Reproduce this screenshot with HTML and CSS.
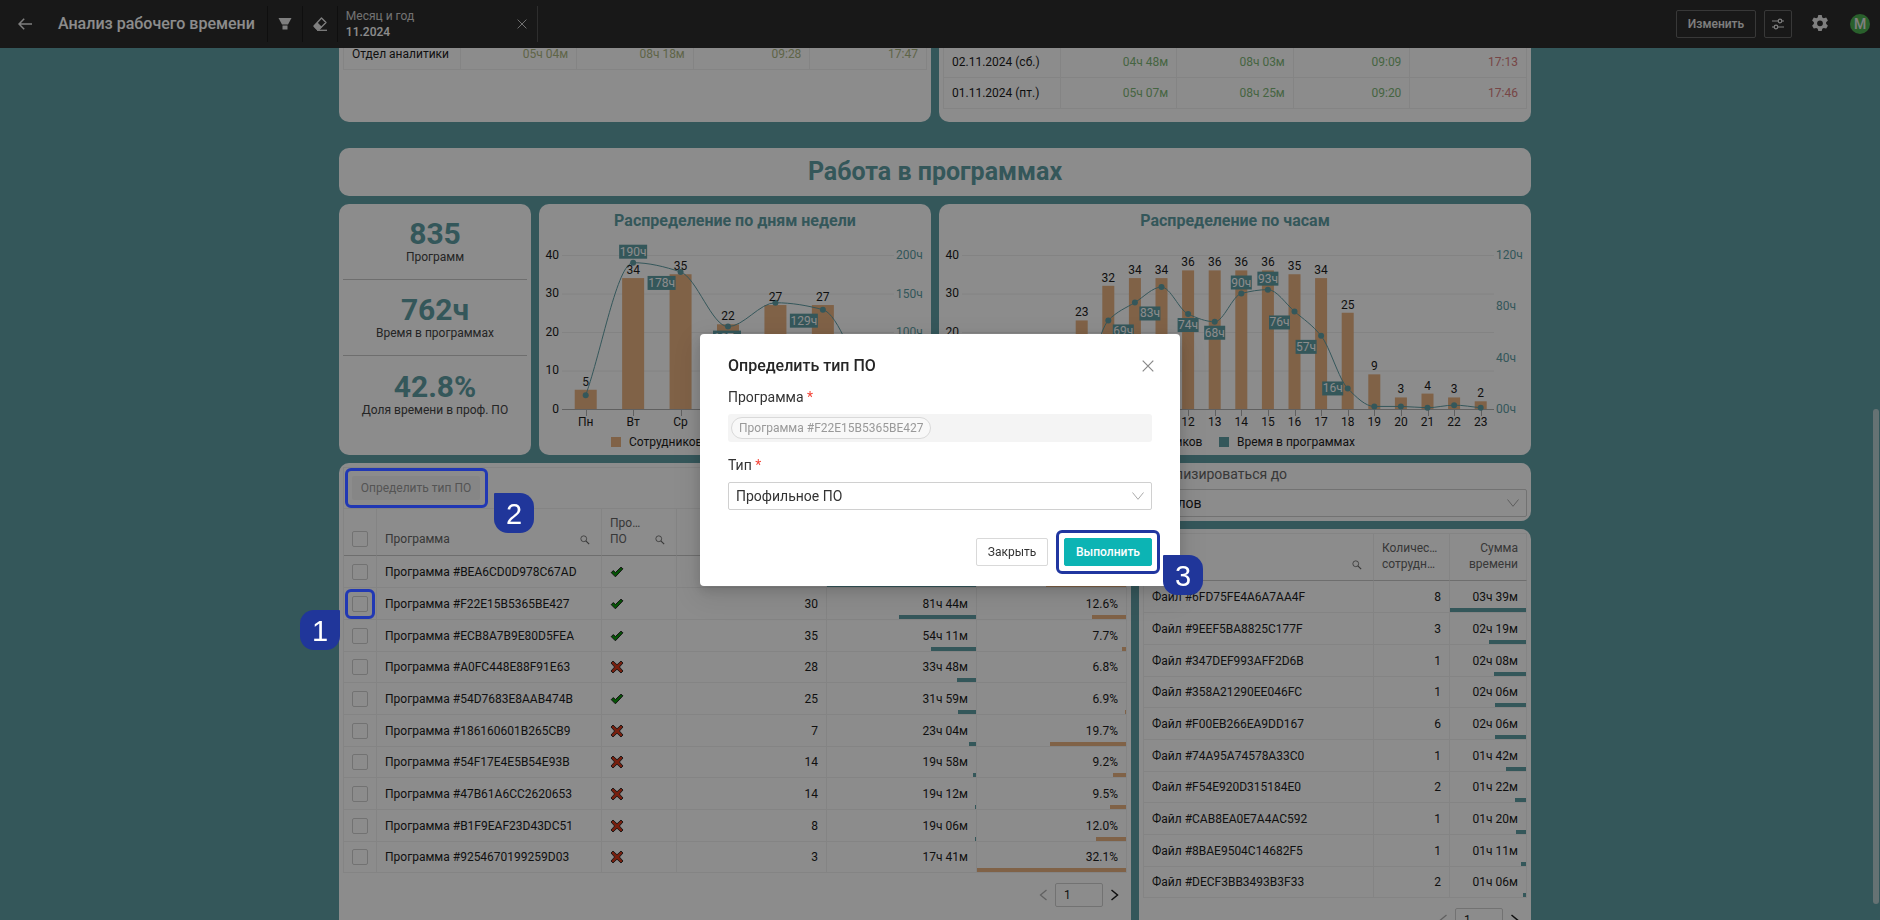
FILE: index.html
```html
<!DOCTYPE html>
<html lang="ru">
<head>
<meta charset="utf-8">
<meta name="viewport" content="width=device-width, initial-scale=1">
<title>Анализ рабочего времени</title>
<link rel="stylesheet" href="styles.css">
</head>
<body>
<svg class="sprite" aria-hidden="true">
  <symbol id="i-search" viewBox="0 0 12 12"><circle cx="4.5" cy="4.5" r="3.5" fill="none" stroke="currentColor"/><path d="M7 7l4 4" stroke="currentColor" stroke-width="1.4"/></symbol>
  <symbol id="i-yes" viewBox="0 0 14 12"><path d="M1.2 6.6L3.4 4.6 5.4 6.6 11 1.2 12.9 2.8 5.4 10.8z" fill="#0a9a0a" stroke="#222" stroke-linejoin="round"/></symbol>
  <symbol id="i-no" viewBox="0 0 14 14"><path d="M3 1L7 4.8 11 1 13 3 9.400 7 13 11 11 13 7 9.200 3 13 1 11 4.600 7 1 3z" fill="#d8391b" stroke="#222" stroke-width=".9" stroke-linejoin="round"/></symbol>
  <symbol id="i-down" viewBox="0 0 12 8"><path d="M.5 .5L6 7.300 11.500 .5" fill="none" stroke="currentColor"/></symbol>
  <symbol id="i-prev" viewBox="0 0 8 12"><path d="M7.500 1L1.500 6l6 5" fill="none" stroke="currentColor" stroke-width="1.300"/></symbol>
  <symbol id="i-next" viewBox="0 0 8 12"><path d="M.5 1l6 5-6 5" fill="none" stroke="currentColor" stroke-width="1.500"/></symbol>
  <symbol id="i-close" viewBox="0 0 12 12"><path d="M.7 .7l10.600 10.600M11.300 .7L.7 11.300" stroke="currentColor" stroke-width="1.200"/></symbol>
</svg>

<header class="topbar">
  <button class="icon-btn back" aria-label="Назад"><svg width="14" height="12" viewBox="0 0 14 12"><path d="M14 6H1M6.200 .8L1 6l5.200 5.200" fill="none" stroke="currentColor" stroke-width="1.500"/></svg></button>
  <h1>Анализ рабочего времени</h1>
  <button class="icon-btn tool" aria-label="Фильтр"><svg width="14" height="12" viewBox="0 0 14 12"><path d="M.5 0h13L10 6.500H4z M4.500 7.500h5V11.500h-5z" fill="currentColor"/></svg></button>
  <button class="icon-btn tool" aria-label="Сбросить"><svg width="16" height="16" viewBox="0 0 16 16"><path d="M9.500 2L14 6.500 7.500 13H5L2 10z" fill="none" stroke="currentColor" stroke-width="1.300" stroke-linejoin="round"/><path d="M5.500 6.500L10 11l-2.500 2.800H4.500L1.500 10.500z" fill="currentColor"/><path d="M5 14.300h10" stroke="currentColor" stroke-width="1.300"/></svg></button>
  <div class="filter">
    <div><span>Месяц и год</span><b>11.2024</b></div>
    <button class="icon-btn" aria-label="Убрать фильтр"><svg width="10" height="10"><use href="#i-close"/></svg></button>
  </div>
  <div class="actions">
    <button class="outline">Изменить</button>
    <button class="outline square" aria-label="Параметры"><svg width="12" height="12" viewBox="0 0 12 12" fill="none" stroke="currentColor" stroke-width="1.200"><path d="M0 3h6M10 3h2M0 9h2M6 9h6"/><circle cx="8" cy="3" r="1.800"/><circle cx="4" cy="9" r="1.800"/></svg></button>
    <button class="icon-btn gear" aria-label="Настройки"><svg width="18" height="18" viewBox="0 0 18 18"><path fill="currentColor" fill-rule="evenodd" d="M7.300 0h3.400l.6 2.500 1.400.8 2.500-.7 1.700 2.900-1.800 1.800v1.500l1.800 1.900-1.700 2.900-2.500-.7-1.400.8-.6 2.400H7.300l-.6-2.400-1.400-.8-2.500.7-1.700-2.900 1.800-1.900V7.300L1.100 5.500l1.700-2.900 2.500.7 1.400-.8zM9 5.400a2.900 2.900 0 100 5.800 2.900 2.900 0 000-5.800z"/></svg></button>
    <button class="avatar">М</button>
  </div>
</header>

<main class="viewport">
  <div class="board">
    <section class="row halves">
      <div class="card">
        <table class="grid plain">
          <tbody><tr><td>Отдел аналитики</td><td class="mid">05ч 04м</td><td class="mid">08ч 18м</td><td class="mid">09:28</td><td class="mid">17:47</td></tr></tbody>
        </table>
      </div>
      <div class="card lowered">
        <table class="grid plain">
          <tbody>
            <tr><td>02.11.2024 (сб.)</td><td class="good">04ч 48м</td><td class="good">08ч 03м</td><td class="good">09:09</td><td class="bad">17:13</td></tr>
            <tr><td>01.11.2024 (пт.)</td><td class="good">05ч 07м</td><td class="good">08ч 25м</td><td class="good">09:20</td><td class="bad">17:46</td></tr>
          </tbody>
        </table>
      </div>
    </section>

    <h2 class="card banner">Работа в программах</h2>

    <section class="row charts">
      <div class="card kpis">
        <div class="kpi"><strong>835</strong><span>Программ</span></div>
        <div class="kpi"><strong>762ч</strong><span>Время в программах</span></div>
        <div class="kpi"><strong>42.8%</strong><span>Доля времени в проф. ПО</span></div>
      </div>
      <div class="card chart"><h3>Распределение по дням недели</h3><svg id="by-day"></svg></div>
      <div class="card chart"><h3>Распределение по часам</h3><svg id="by-hour"></svg></div>
    </section>

    <section class="row tables">
      <div class="card">
        <div class="panel">
          <div class="toolbar">
            <div class="anchor"><button class="define" disabled>Определить тип ПО</button><span class="frame"></span><span class="step after">2</span></div>
          </div>
          <table class="grid data programs">
            <colgroup><col class="c-check"><col class="c-name"><col class="c-flag"><col><col><col></colgroup>
            <thead><tr>
              <th><input type="checkbox" aria-label="Выбрать все"></th>
              <th><div class="head"><span>Программа</span><svg width="10" height="10"><use href="#i-search"/></svg></div></th>
              <th><div class="head"><span>Про…<br>ПО</span><svg width="10" height="10"><use href="#i-search"/></svg></div></th>
              <th class="num">Количество<br>сотрудников</th><th class="num">Сумма<br>времени</th><th class="num">Доля</th>
            </tr></thead>
            <tbody>
              <tr><td><input type="checkbox" aria-label="Выбрать"></td><td>Программа #BEA6CD0D978C67AD</td><td><svg width="14" height="12"><use href="#i-yes"/></svg></td><td class="num">36</td><td class="num">137ч 52м<i class="bar" style="width:100%"></i></td><td class="num">20.4%<i class="bar warm" style="width:54%"></i></td></tr>
              <tr><td><div class="anchor"><input type="checkbox" aria-label="Выбрать"><span class="frame"></span><span class="step before">1</span></div></td><td>Программа #F22E15B5365BE427</td><td><svg width="14" height="12"><use href="#i-yes"/></svg></td><td class="num">30</td><td class="num">81ч 44м<i class="bar" style="width:52%"></i></td><td class="num">12.6%<i class="bar warm" style="width:23%"></i></td></tr>
              <tr><td><input type="checkbox" aria-label="Выбрать"></td><td>Программа #ECB8A7B9E80D5FEA</td><td><svg width="14" height="12"><use href="#i-yes"/></svg></td><td class="num">35</td><td class="num">54ч 11м<i class="bar" style="width:30%"></i></td><td class="num">7.7%<i class="bar warm" style="width:3%"></i></td></tr>
              <tr><td><input type="checkbox" aria-label="Выбрать"></td><td>Программа #A0FC448E88F91E63</td><td><svg width="14" height="14"><use href="#i-no"/></svg></td><td class="num">28</td><td class="num">33ч 48м<i class="bar" style="width:13%"></i></td><td class="num">6.8%</td></tr>
              <tr><td><input type="checkbox" aria-label="Выбрать"></td><td>Программа #54D7683E8AAB474B</td><td><svg width="14" height="12"><use href="#i-yes"/></svg></td><td class="num">25</td><td class="num">31ч 59м<i class="bar" style="width:12%"></i></td><td class="num">6.9%<i class="bar warm" style="width:1%"></i></td></tr>
              <tr><td><input type="checkbox" aria-label="Выбрать"></td><td>Программа #186160601B265CB9</td><td><svg width="14" height="14"><use href="#i-no"/></svg></td><td class="num">7</td><td class="num">23ч 04м<i class="bar" style="width:5%"></i></td><td class="num">19.7%<i class="bar warm" style="width:51%"></i></td></tr>
              <tr><td><input type="checkbox" aria-label="Выбрать"></td><td>Программа #54F17E4E5B54E93B</td><td><svg width="14" height="14"><use href="#i-no"/></svg></td><td class="num">14</td><td class="num">19ч 58м<i class="bar" style="width:2%"></i></td><td class="num">9.2%<i class="bar warm" style="width:9%"></i></td></tr>
              <tr><td><input type="checkbox" aria-label="Выбрать"></td><td>Программа #47B61A6CC2620653</td><td><svg width="14" height="14"><use href="#i-no"/></svg></td><td class="num">14</td><td class="num">19ч 12м<i class="bar" style="width:1%"></i></td><td class="num">9.5%<i class="bar warm" style="width:11%"></i></td></tr>
              <tr><td><input type="checkbox" aria-label="Выбрать"></td><td>Программа #B1F9EAF23D43DC51</td><td><svg width="14" height="14"><use href="#i-no"/></svg></td><td class="num">8</td><td class="num">19ч 06м<i class="bar" style="width:1%"></i></td><td class="num">12.0%<i class="bar warm" style="width:20%"></i></td></tr>
              <tr><td><input type="checkbox" aria-label="Выбрать"></td><td>Программа #9254670199259D03</td><td><svg width="14" height="14"><use href="#i-no"/></svg></td><td class="num">3</td><td class="num">17ч 41м</td><td class="num">32.1%<i class="bar warm" style="width:100%"></i></td></tr>
            </tbody>
          </table>
        </div>
        <nav class="pager"><button disabled aria-label="Назад"><svg width="8" height="12"><use href="#i-prev"/></svg></button><input type="text" value="1" aria-label="Страница"><button aria-label="Вперёд"><svg width="8" height="12"><use href="#i-next"/></svg></button></nav>
      </div>

      <div class="stack">
        <div class="card detail">
          <label for="detail">Детализироваться до</label>
          <div class="select"><select id="detail"><option>Файлов</option></select><svg width="12" height="8"><use href="#i-down"/></svg></div>
        </div>
        <div class="card grow">
          <table class="grid data files">
            <colgroup><col><col class="c-count"><col class="c-sum"></colgroup>
            <thead><tr>
              <th><div class="head"><span>Файл</span><svg width="10" height="10"><use href="#i-search"/></svg></div></th>
              <th>Количес…<br>сотрудн…</th><th class="num">Сумма<br>времени</th>
            </tr></thead>
            <tbody>
              <tr><td>Файл #6FD75FE4A6A7AA4F</td><td class="num">8</td><td class="num">03ч 39м<i class="bar" style="width:100%"></i></td></tr>
              <tr><td>Файл #9EEF5BA8825C177F</td><td class="num">3</td><td class="num">02ч 19м<i class="bar" style="width:49%"></i></td></tr>
              <tr><td>Файл #347DEF993AFF2D6B</td><td class="num">1</td><td class="num">02ч 08м<i class="bar" style="width:42%"></i></td></tr>
              <tr><td>Файл #358A21290EE046FC</td><td class="num">1</td><td class="num">02ч 06м<i class="bar" style="width:41%"></i></td></tr>
              <tr><td>Файл #F00EB266EA9DD167</td><td class="num">6</td><td class="num">02ч 06м<i class="bar" style="width:41%"></i></td></tr>
              <tr><td>Файл #74A95A74578A33C0</td><td class="num">1</td><td class="num">01ч 42м<i class="bar" style="width:26%"></i></td></tr>
              <tr><td>Файл #F54E920D315184E0</td><td class="num">2</td><td class="num">01ч 22м<i class="bar" style="width:14%"></i></td></tr>
              <tr><td>Файл #CAB8EA0E7A4AC592</td><td class="num">1</td><td class="num">01ч 20м<i class="bar" style="width:13%"></i></td></tr>
              <tr><td>Файл #8BAE9504C14682F5</td><td class="num">1</td><td class="num">01ч 11м<i class="bar" style="width:7%"></i></td></tr>
              <tr><td>Файл #DECF3BB3493B3F33</td><td class="num">2</td><td class="num">01ч 06м<i class="bar" style="width:4%"></i></td></tr>
            </tbody>
          </table>
          <nav class="pager"><button disabled aria-label="Назад"><svg width="8" height="12"><use href="#i-prev"/></svg></button><input type="text" value="1" aria-label="Страница"><button aria-label="Вперёд"><svg width="8" height="12"><use href="#i-next"/></svg></button></nav>
        </div>
      </div>
    </section>
  </div>
  <div class="scrollbar"></div>
</main>

<div class="mask">
  <form class="modal" role="dialog" aria-labelledby="modal-title">
    <div class="modal-head"><h2 id="modal-title">Определить тип ПО</h2><button type="button" class="icon-btn" aria-label="Закрыть окно"><svg width="12" height="12"><use href="#i-close"/></svg></button></div>
    <span class="caption">Программа <em>*</em></span>
    <div class="tags"><span>Программа #F22E15B5365BE427</span></div>
    <label class="caption" for="kind">Тип <em>*</em></label>
    <div class="select"><select id="kind"><option>Профильное ПО</option></select><svg width="12" height="8"><use href="#i-down"/></svg></div>
    <div class="modal-foot">
      <button type="button" class="btn">Закрыть</button>
      <div class="anchor"><button type="button" class="btn primary">Выполнить</button><span class="frame"></span><span class="step after">3</span></div>
    </div>
  </form>
</div>
<script src="charts.js"></script>
</body>
</html>
```

FILE: styles.css
```css
* { box-sizing: border-box; }
body {
  margin: 0;
  height: 100vh;
  display: flex;
  flex-direction: column;
  overflow: hidden;
  background: #609ea5;
  color: #1c1c1c;
  font: 12px/16px Roboto, "Noto Sans", sans-serif;
}
button, input, select { font: inherit; color: inherit; }
button { padding: 0; border: 0; background: none; }
svg { display: block; }
h1, h2, h3 { margin: 0; }
.sprite { position: absolute; width: 0; height: 0; }

/* Top bar */
.topbar {
  flex: none;
  display: flex;
  align-items: center;
  height: 48px;
  padding-right: 10px;
  background: #2d2d2d;
  color: #e8e8e8;
}
.topbar h1 { padding-right: 12px; font-size: 16px; line-height: 24px; font-weight: 500; color: #fff; }
.icon-btn { display: grid; place-items: center; }
.back { width: 50px; margin-right: 8px; height: 36px; }
.tool { width: 35px; height: 36px; border-left: 1px solid #1c1c1c; }
.filter {
  display: flex;
  align-items: center;
  justify-content: space-between;
  width: 201px;
  height: 36px;
  padding: 0 10px 0 8px;
  border-left: 1px solid #1c1c1c;
  border-right: 1px solid #555;
}
.filter span, .filter b { display: block; }
.filter span { color: #d0d0d0; }
.filter b { font-weight: 500; color: #fff; }
.filter .icon-btn { color: #ccc; }
.actions { display: flex; align-items: center; gap: 8px; margin-left: auto; }
.outline {
  display: grid;
  place-items: center;
  width: 80px;
  height: 28px;
  border: 1px solid #666;
  border-radius: 2px;
  font-weight: 500;
}
.outline.square { width: 28px; }
.gear { width: 40px; height: 28px; }
.avatar { width: 20px; height: 20px; margin-left: 2px; border-radius: 50%; background: #4caf50; font-size: 14px; font-weight: 500; }

/* Board */
.viewport { position: relative; flex: 1; min-height: 0; overflow: hidden; padding-right: 10px; }
.scrollbar { position: absolute; right: 1px; top: 361px; bottom: 16px; width: 6px; border-radius: 3px; background: #b9cfd2; }
.board { max-width: 1192px; margin: -10px auto 0; }
.card { border-radius: 10px; background: #fff; padding: 4px; }
.row { display: grid; gap: 8px; }
.halves { grid-template-columns: 1fr 1fr; height: 84px; }
.halves .card { padding-top: 0; }
.halves .lowered { padding-top: 8px; }
.banner {
  margin: 26px 0 8px;
  padding: 8px;
  text-align: center;
  font-size: 25px;
  line-height: 32px;
  font-weight: 700;
  color: #609ea5;
}
.charts { grid-template-columns: 192fr 392fr 592fr; margin-bottom: 8px; }
.kpis { padding: 0 4px; }
.kpi { height: 76px; padding-top: 15px; text-align: center; border-bottom: 1px solid #c8c8c8; }
.kpi:last-child { padding-top: 16px; border: 0; }
.kpi strong { display: block; font-size: 30px; line-height: 30px; color: #609ea5; }
.kpi span { display: block; line-height: 16px; color: #444; }
.chart { padding: 4px 0 0; }
.chart h3 { text-align: center; font-size: 16px; line-height: 26px; font-weight: 700; color: #609ea5; }
.chart svg { width: 100%; height: 221px; }
.chart text { font-size: 12px; fill: #1c1c1c; }
.chart .grid-line { stroke: #eee; }
.chart .axis { stroke: #b0b0b0; }
.chart .col { fill: #e9b281; }
.chart .curve { fill: none; stroke: #609ea5; stroke-width: 1; }
.chart .dot, .chart .chip { fill: #609ea5; }
.chart .scale { fill: #609ea5; }
.chart .chip-text { fill: #fff; }

/* Tables */
.tables { grid-template-columns: 792fr 392fr; }
.stack { display: flex; flex-direction: column; gap: 8px; }
.grow { flex: 1; }
.grid { width: 100%; table-layout: fixed; border-collapse: separate; border-spacing: 0; border-left: 1px solid #f0f0f0; }
.grid td, .grid th {
  position: relative;
  height: 32px;
  padding: 0 8px;
  border-right: 1px solid #f0f0f0;
  border-bottom: 1px solid #f0f0f0;
  text-align: left;
  white-space: nowrap;
}
.plain td + td { text-align: right; }
.plain tr + tr td { height: 31px; }
.mid { color: #aeb884; }
.good { color: #7fb878; }
.bad { color: #d98080; }
.panel { border-top: 1px solid #f0f0f0; }
.files { border-top: 1px solid #f0f0f0; }
.toolbar { height: 41px; padding: 8px; border: 1px solid #f0f0f0; border-top: 0; }
.define { width: 128px; height: 24px; background: #f5f5f5; color: #999; border-radius: 2px; }
.data th { height: 47px; padding-bottom: 8px; vertical-align: bottom; font-weight: 400; color: #666; border-bottom-color: #c8c8c8; }
.data .num { text-align: right; }
.data tbody tr:nth-child(3n+4) td { height: 31px; }
.head { display: flex; align-items: flex-end; justify-content: space-between; padding-right: 3px; }
.head svg { margin-bottom: 2px; }
.c-check { width: 33px; }
.c-name { width: 225px; }
.c-flag { width: 75px; }
.c-count { width: 76px; }
.c-sum { width: 77px; }
.grid input {
  display: block;
  appearance: none;
  width: 16px;
  height: 16px;
  margin: 0;
  border: 1px solid #d0d0d0;
  border-radius: 2px;
}
.bar { position: absolute; right: 0; bottom: 0; height: 4px; background: #609ea5; }
.warm { background: #e9b281; }
.pager { display: flex; justify-content: flex-end; align-items: center; gap: 8px; padding: 10px 8px 10px 0; }
.pager input { width: 48px; height: 24px; padding: 0 8px; border: 1px solid #d0d0d0; border-radius: 2px; background: #fff; }
.pager button:disabled { color: #b0b0b0; }
.detail { padding-top: 1px; }
.detail label { display: block; padding-bottom: 5px; font-size: 14px; line-height: 20px; color: #666; }
.select { position: relative; font-size: 14px; }
.select select { display: block; width: 100%; height: 28px; padding: 0 7px; appearance: none; background: #fff; border: 1px solid #d0d0d0; border-radius: 2px; }
.select svg { position: absolute; right: 8px; top: 10px; color: #aaa; }

/* Numbered steps */
.anchor { position: relative; width: max-content; }
.frame { position: absolute; z-index: 30; inset: -8px; border: 3px solid #2036a0; border-radius: 6px; }
.define + .frame { left: -7px; border-color: #2138b4; }
.grid .anchor .frame { inset: -7px; border-color: #2138b4; }
.step {
  position: absolute;
  z-index: 31;
  width: 40px;
  height: 40px;
  background: #20369a;
  color: #fff;
  text-align: center;
  font: 29px/42px "Liberation Sans", Arial, sans-serif;
}
.after { left: 100%; top: 100%; margin: -11px 0 0 11px; border-radius: 1px 14px 14px 14px; }
.before { right: 100%; top: 100%; margin: -2px 12px 0 0; border-radius: 14px 1px 14px 14px; }
.toolbar .after { margin: -7px 0 0 14px; }

/* Dialog */
.mask { position: fixed; z-index: 20; inset: 0; display: flex; justify-content: center; align-items: center; background: rgba(0, 0, 0, .45); }
.modal {
  width: 480px;
  padding: 20px 28px;
  border-radius: 4px;
  background: #fff;
  color: #333;
  font-size: 14px;
  box-shadow: 0 4px 12px rgba(0, 0, 0, .15), 0 9px 28px 8px rgba(0, 0, 0, .08);
}
.modal-head { display: flex; align-items: center; justify-content: space-between; height: 24px; }
.modal-head h2 { font-size: 16px; font-weight: 500; color: #262626; }
.modal-head .icon-btn { color: #888; margin-right: -2px; }
.caption { display: block; padding: 8px 0 6px; line-height: 22px; }
.caption em { color: #f44336; font-style: normal; }
.tags { height: 28px; padding: 3px; border-radius: 3px; background: #f4f4f4; }
.tags span { display: inline-block; height: 22px; padding: 0 6px 0 7px; border: 1px solid #d9d9d9; border-radius: 11px; background: #f8f8f8; color: #999; font-size: 12px; line-height: 20px; }
.tags + .caption { padding: 12px 0 6px; }
.modal-foot { display: flex; justify-content: flex-end; gap: 16px; padding-top: 28px; }
.btn { display: block; width: 72px; height: 28px; border: 1px solid #d9d9d9; border-radius: 2px; font-size: 12px; }
.btn.primary { width: 88px; border-color: #0cb4b4; background: #0cb4b4; color: #fff; font-weight: 500; }
```

FILE: charts.js
```js
const NS = 'http://www.w3.org/2000/svg';
const BASE = 175;
const HEIGHT = 154;

function add(svg, tag, attrs, text) {
  const node = document.createElementNS(NS, tag);
  for (const key in attrs) node.setAttribute(key, attrs[key]);
  if (text !== undefined) node.textContent = text;
  svg.appendChild(node);
}

// Cubic curve that never overshoots its points.
function monotone(points) {
  const slope = (a, b) => (b[1] - a[1]) / (b[0] - a[0]);
  const last = points.length - 1;
  const m = points.map((p, i) => {
    if (i === 0) return slope(points[0], points[1]);
    if (i === last) return slope(points[i - 1], p);
    const s0 = slope(points[i - 1], p), s1 = slope(p, points[i + 1]);
    return s0 * s1 <= 0 ? 0 : (2 * s0 * s1) / (s0 + s1);
  });
  let d = `M${points[0]}`;
  for (let i = 0; i < last; i++) {
    const [a, b] = [points[i], points[i + 1]], h = (b[0] - a[0]) / 3;
    d += `C${a[0] + h} ${a[1] + m[i] * h} ${b[0] - h} ${b[1] - m[i + 1] * h} ${b[0]} ${b[1]}`;
  }
  return d;
}

function draw(id, o) {
  const svg = document.getElementById(id);
  svg.setAttribute('viewBox', `0 0 ${o.width} 221`);
  const right = o.width - 37, left = o.left, step = (right - left) / o.names.length;
  for (let v = 0; v <= 40; v += 10) {
    const y = BASE - v / 40 * HEIGHT + .5;
    add(svg, 'path', { d: `M${left} ${y}H${right}`, class: v ? 'grid-line' : 'axis' });
    add(svg, 'text', { x: left - 3, y: y + 3, 'text-anchor': 'end' }, v);
  }
  o.scale.forEach((t, i) => add(svg, 'text', { x: right + 2, y: BASE + 4 - i * HEIGHT / (o.scale.length - 1), class: 'scale' }, t));
  const x = i => left + step * (i + .5);
  o.names.forEach((t, i) => {
    add(svg, 'path', { d: `M${Math.round(x(i)) + .5} ${BASE}v7`, class: 'axis' });
    add(svg, 'text', { x: x(i), y: 192, 'text-anchor': 'middle' }, t);
    const h = o.bars[i] / 40 * HEIGHT;
    if (h) add(svg, 'rect', { x: x(i) - o.bar / 2, y: BASE - h, width: o.bar, height: h, class: 'col' });
  });
  const points = o.hours.map((v, i) => [x(i), BASE - v / o.max * HEIGHT]);
  add(svg, 'path', { d: monotone(points), class: 'curve' });
  points.forEach(p => add(svg, 'circle', { cx: p[0], cy: p[1], r: 3, class: 'dot' }));
  o.bars.forEach((v, i) => v && add(svg, 'text', { x: x(i), y: BASE - v / 40 * HEIGHT - 4, 'text-anchor': 'middle' }, v));
  o.chips.forEach(([i, dx, dy, text]) => {
    const w = text.length * 7, cx = points[i][0] + dx, cy = points[i][1] + dy;
    add(svg, 'rect', { x: cx - w / 2, y: cy - 7, width: w, height: 14, class: 'chip' });
    add(svg, 'text', { x: cx, y: cy + 4, 'text-anchor': 'middle', class: 'chip-text' }, text);
  });
  const start = o.width / 2 - 124;
  add(svg, 'rect', { x: start, y: 203, width: 10, height: 10, class: 'col' });
  add(svg, 'text', { x: start + 18, y: 212 }, 'Сотрудников');
  add(svg, 'rect', { x: start + 108, y: 203, width: 10, height: 10, class: 'chip' });
  add(svg, 'text', { x: start + 126, y: 212 }, 'Время в программах');
}

draw('by-day', {
  width: 392, left: 23, bar: 22, max: 200,
  names: ['Пн', 'Вт', 'Ср', 'Чт', 'Пт', 'Сб', 'Вс'],
  bars: [5, 34, 35, 22, 27, 27, 6],
  hours: [18, 190, 178, 107, 138, 129, 20],
  scale: ['00ч', '50ч', '100ч', '150ч', '200ч'],
  chips: [[1, 0, -11, '190ч'], [2, -19, 11, '178ч'], [3, -1, 11, '107ч'], [5, -19, 11, '129ч']]
});

draw('by-hour', {
  width: 592, left: 23, bar: 12, max: 120,
  names: [4, 5, 6, 7, 8, 9, 10, 11, 12, 13, 14, 15, 16, 17, 18, 19, 20, 21, 22, 23],
  bars: [0, 0, 0, 1, 23, 32, 34, 34, 36, 36, 36, 36, 35, 34, 25, 9, 3, 4, 3, 2],
  hours: [0, 0, 0, 1, 18, 69, 83, 95, 74, 68, 90, 93, 76, 57, 16, 2, 2, 1, 3, 1],
  scale: ['00ч', '40ч', '80ч', '120ч'],
  chips: [[5, 15, 11, '69ч'], [6, 15, 11, '83ч'], [8, 0, 11, '74ч'], [9, 0, 11, '68ч'], [10, 0, -11, '90ч'],
    [11, 0, -11, '93ч'], [12, -15, 11, '76ч'], [13, -15, 11, '57ч'], [14, -15, 0, '16ч']]
});
```
